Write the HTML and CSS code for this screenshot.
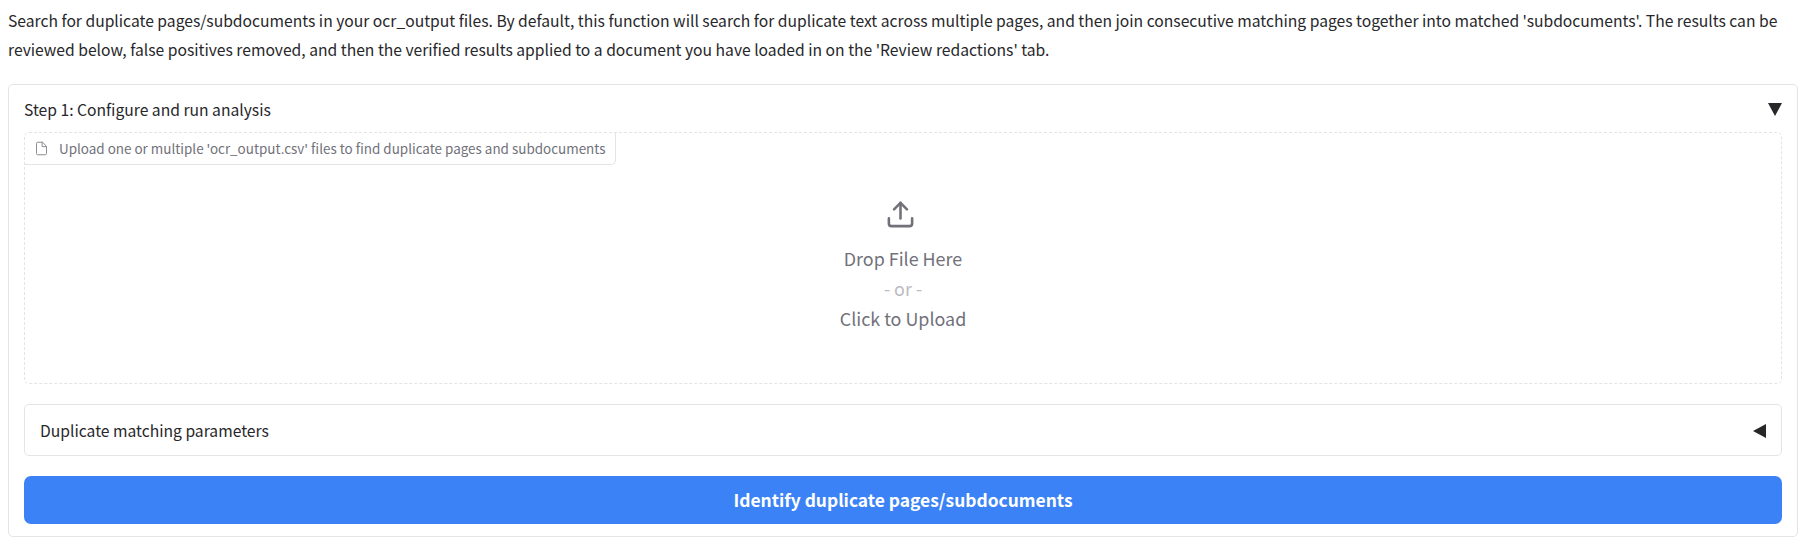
FILE: index.html
```
<!DOCTYPE html>
<html lang="en">
<head>
<meta charset="utf-8">
<title>Identify duplicate pages</title>
<link rel="stylesheet" href="styles.css">
</head>
<body>
<p class="intro"><span class="line">Search for duplicate pages/subdocuments in your ocr_output files. By default, this function will search for duplicate text across multiple pages, and then join consecutive matching pages together into matched 'subdocuments'. The results can be</span> <span class="line">reviewed below, false positives removed, and then the verified results applied to a document you have loaded in on the 'Review redactions' tab.</span></p>
<section class="panel">
  <header class="panel-head">
    <span>Step 1: Configure and run analysis</span>
    <svg class="arrow-down" width="14" height="13" viewBox="0 0 14 13"><path d="M0 0H14L7 13Z" fill="#27272a"/></svg>
  </header>
  <div class="dropzone">
    <div class="label">
      <svg class="file-icon" width="15" height="15" viewBox="0 0 24 24" fill="none" stroke="currentColor" stroke-width="1.6" stroke-linecap="round" stroke-linejoin="round"><path d="M13 2H6a2 2 0 0 0-2 2v16a2 2 0 0 0 2 2h12a2 2 0 0 0 2-2V9z"/><path d="M13 2v7h7"/></svg>
      <span>Upload one or multiple 'ocr_output.csv' files to find duplicate pages and subdocuments</span>
    </div>
    <div class="prompt">
      <svg class="upload-icon" width="31" height="31" viewBox="0 0 24 24" fill="none" stroke="currentColor" stroke-width="2" stroke-linecap="round" stroke-linejoin="round"><path d="M21 15v4a2 2 0 0 1-2 2H5a2 2 0 0 1-2-2v-4"/><path d="M17 8l-5-5-5 5"/><path d="M12 3v12"/></svg>
      <span>Drop File Here</span>
      <span class="or">- or -</span>
      <span>Click to Upload</span>
    </div>
  </div>
  <div class="accordion">
    <span>Duplicate matching parameters</span>
    <svg class="arrow-left" width="13" height="14" viewBox="0 0 13 14"><path d="M13 0V14L0 7Z" fill="#27272a"/></svg>
  </div>
  <button class="primary" type="button">Identify duplicate pages/subdocuments</button>
</section>
</body>
</html>
```
FILE: styles.css
```
* { box-sizing: border-box; }
body {
  margin: 0;
  padding: 6px 9px 0 8px;
  background: #fff;
  color: #27272a;
  font: 15.67px/29px "Noto Sans CJK SC", "Open Sans", sans-serif;
}
.intro { margin: 0 0 20px; }
.line { display: block; white-space: nowrap; }
.panel {
  height: 453px;
  padding: 0 15px;
  border: 1px solid #e4e4e7;
  border-radius: 5px;
}
.panel-head {
  display: flex;
  justify-content: space-between;
  height: 47px;
  padding-top: 10px;
}
.arrow-down { margin-top: 8px; }
.dropzone {
  height: 252px;
  border: 1px dashed #e4e4e7;
  border-radius: 5px;
}
.label {
  display: flex;
  align-items: center;
  gap: 10px;
  width: 591px;
  height: 32px;
  padding-left: 9px;
  border: solid #e4e4e7;
  border-width: 0 1px 1px 0;
  border-radius: 0 0 5px 0;
  color: #71717a;
  font-size: 13.44px;
  white-space: nowrap;
}
.file-icon { flex: none; opacity: .8; }
.prompt {
  display: flex;
  flex-direction: column;
  align-items: center;
  padding-top: 34px;
  color: #71717a;
  font-size: 17.9px;
  line-height: 30px;
}
.upload-icon { margin: 0 5px 13px 0; }
.or { color: #bbbbc2; }
.accordion {
  display: flex;
  align-items: center;
  justify-content: space-between;
  height: 52px;
  margin: 20px 0;
  padding: 0 15px;
  border: 1px solid #e4e4e7;
  border-radius: 5px;
}
.arrow-left { margin-top: 2px; }
.primary {
  display: block;
  width: 100%;
  height: 48px;
  padding: 0;
  border: 0;
  border-radius: 7px;
  background: #3b82f6;
  color: #fff;
  font: 600 17.4px/48px "Noto Sans CJK SC", "Open Sans", sans-serif;
}
```
